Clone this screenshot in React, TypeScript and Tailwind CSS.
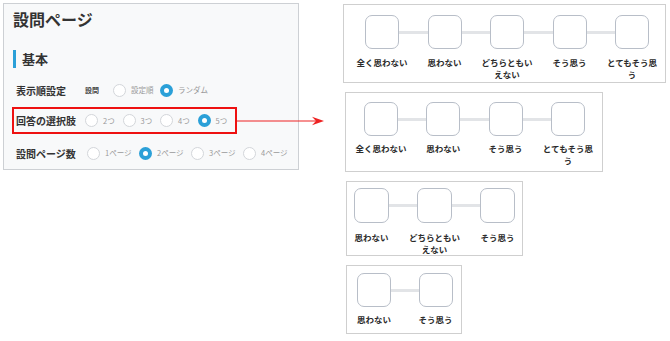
import React from "react";

type Box = {
  labels: React.ReactNode[];
  width: string;
  height: string;
  ml: string;
  pt: string;
  pl: string;
  sq: string;
  line: string;
  labelMt: string;
};

const boxes: Box[] = [
  {
    labels: [
      "全く思わない",
      "思わない",
      <>どちらともい<br />えない</>,
      "そう思う",
      <>とてもそう思<br />う</>,
    ],
    width: "w-[323px]",
    height: "h-[79px]",
    ml: "ml-0",
    pt: "pt-[10px]",
    pl: "pl-[21px]",
    sq: "w-[34px] h-[34px]",
    line: "w-[28.5px]",
    labelMt: "mt-[7px]",
  },
  {
    labels: ["全く思わない", "思わない", "そう思う", <>とてもそう思<br />う</>],
    width: "w-[258px]",
    height: "h-[80px]",
    ml: "ml-[2px]",
    pt: "pt-[9px]",
    pl: "pl-[18px]",
    sq: "w-[34px] h-[34px]",
    line: "w-[28.3px]",
    labelMt: "mt-[6px]",
  },
  {
    labels: ["思わない", <>どちらともい<br />えない</>, "そう思う"],
    width: "w-[177px]",
    height: "h-[75px]",
    ml: "ml-[3px]",
    pt: "pt-[6px]",
    pl: "pl-[7px]",
    sq: "w-[35px] h-[35px]",
    line: "w-[28px]",
    labelMt: "mt-[8px]",
  },
  {
    labels: ["思わない", "そう思う"],
    width: "w-[116px]",
    height: "h-[69px]",
    ml: "ml-[3px]",
    pt: "pt-[7px]",
    pl: "pl-[10px]",
    sq: "w-[34px] h-[34px]",
    line: "w-[27.5px]",
    labelMt: "mt-[6px]",
  },
];

function Radio({ checked }: { checked?: boolean }) {
  if (checked) {
    return (
      <span className="flex h-[13px] w-[13px] shrink-0 items-center justify-center rounded-full bg-[#2ba0d8]">
        <span className="h-[5px] w-[5px] rounded-full bg-white" />
      </span>
    );
  }
  return <span className="h-[13px] w-[13px] shrink-0 rounded-full border border-[#d3d6da] bg-white" />;
}

function Options({ items, checked, width }: { items: string[]; checked: number; width: string }) {
  return (
    <div className="flex items-center">
      {items.map((it, i) => (
        <div key={it} className={`flex items-center gap-[5px] ${width}`}>
          <Radio checked={i === checked} />
          <span className="text-[7.5px] text-[#9a9a9a] whitespace-nowrap">{it}</span>
        </div>
      ))}
    </div>
  );
}

function ScaleBox({ b }: { b: Box }) {
  return (
    <div className={`border border-[#cfcfcf] bg-white ${b.width} ${b.height} ${b.ml} ${b.pt} ${b.pl}`}>
      <div className="flex items-start">
        {b.labels.map((label, i) => (
          <React.Fragment key={i}>
            {i > 0 && <div className={`mt-[15.5px] h-[3px] bg-[#e2e4e7] ${b.line}`} />}
            <div className={`flex flex-col items-center ${b.sq.split(" ")[0]}`}>
              <div className={`rounded-[7px] border-[1.5px] border-[#b8bec8] bg-white ${b.sq}`} />
              <div className={`whitespace-nowrap text-center text-[8.5px] font-bold leading-[12px] text-[#2b2b2b] ${b.labelMt}`}>
                {label}
              </div>
            </div>
          </React.Fragment>
        ))}
      </div>
    </div>
  );
}

export default function App() {
  return (
    <div className="relative h-[341px] w-[670px] overflow-hidden bg-white font-['Noto_Sans_CJK_JP','Noto_Sans',sans-serif] text-[#333]">
      <div className="flex items-start">
        <div className="ml-[3px] mt-[3px] h-[167px] w-[296px] border border-[#cdd0d4] bg-[#f8f9fa] pl-[9px] pt-[5px]">
          <div className="text-[16px] font-bold leading-[20px] text-[#333]">設問ページ</div>

          <div className="mt-[21px] flex items-center gap-[6px]">
            <span className="h-[18px] w-[3px] bg-[#2ba0d8]" />
            <span className="text-[13px] font-bold leading-[18px]">基本</span>
          </div>

          <div className="ml-[3px] mt-[12px] flex h-[20px] items-center">
            <span className="w-[69px] text-[10px] font-bold">表示順設定</span>
            <span className="w-[28px] text-[7px] font-bold text-[#444]">設問</span>
            <Options items={["設定順", "ランダム"]} checked={1} width="w-[47px]" />
          </div>

          <div className="-ml-[1px] mt-[7px] flex h-[27px] w-[225px] items-center border-2 border-[#ee1111] pl-[2px]">
            <span className="w-[71px] text-[10px] font-bold">回答の選択肢</span>
            <Options items={["2つ", "3つ", "4つ", "5つ"]} checked={3} width="w-[37.5px]" />
          </div>

          <div className="ml-[3px] mt-[9px] flex h-[20px] items-center">
            <span className="w-[71px] text-[10px] font-bold">設問ページ数</span>
            <Options items={["1ページ", "2ページ", "3ページ", "4ページ"]} checked={1} width="w-[52px]" />
          </div>
        </div>

        <div className="ml-[44px] mt-[4px] flex flex-col gap-[9px]">
          {boxes.map((b, i) => (
            <ScaleBox key={i} b={b} />
          ))}
        </div>
      </div>

      <svg className="absolute left-[237px] top-[115px]" width="90" height="12" viewBox="0 0 90 12">
        <line x1="0" y1="6" x2="82" y2="6" stroke="#ee2222" strokeWidth="1.2" />
        <polygon points="87,6 75,1.8 79,6 75,10.2" fill="#ee2222" />
      </svg>
    </div>
  );
}
